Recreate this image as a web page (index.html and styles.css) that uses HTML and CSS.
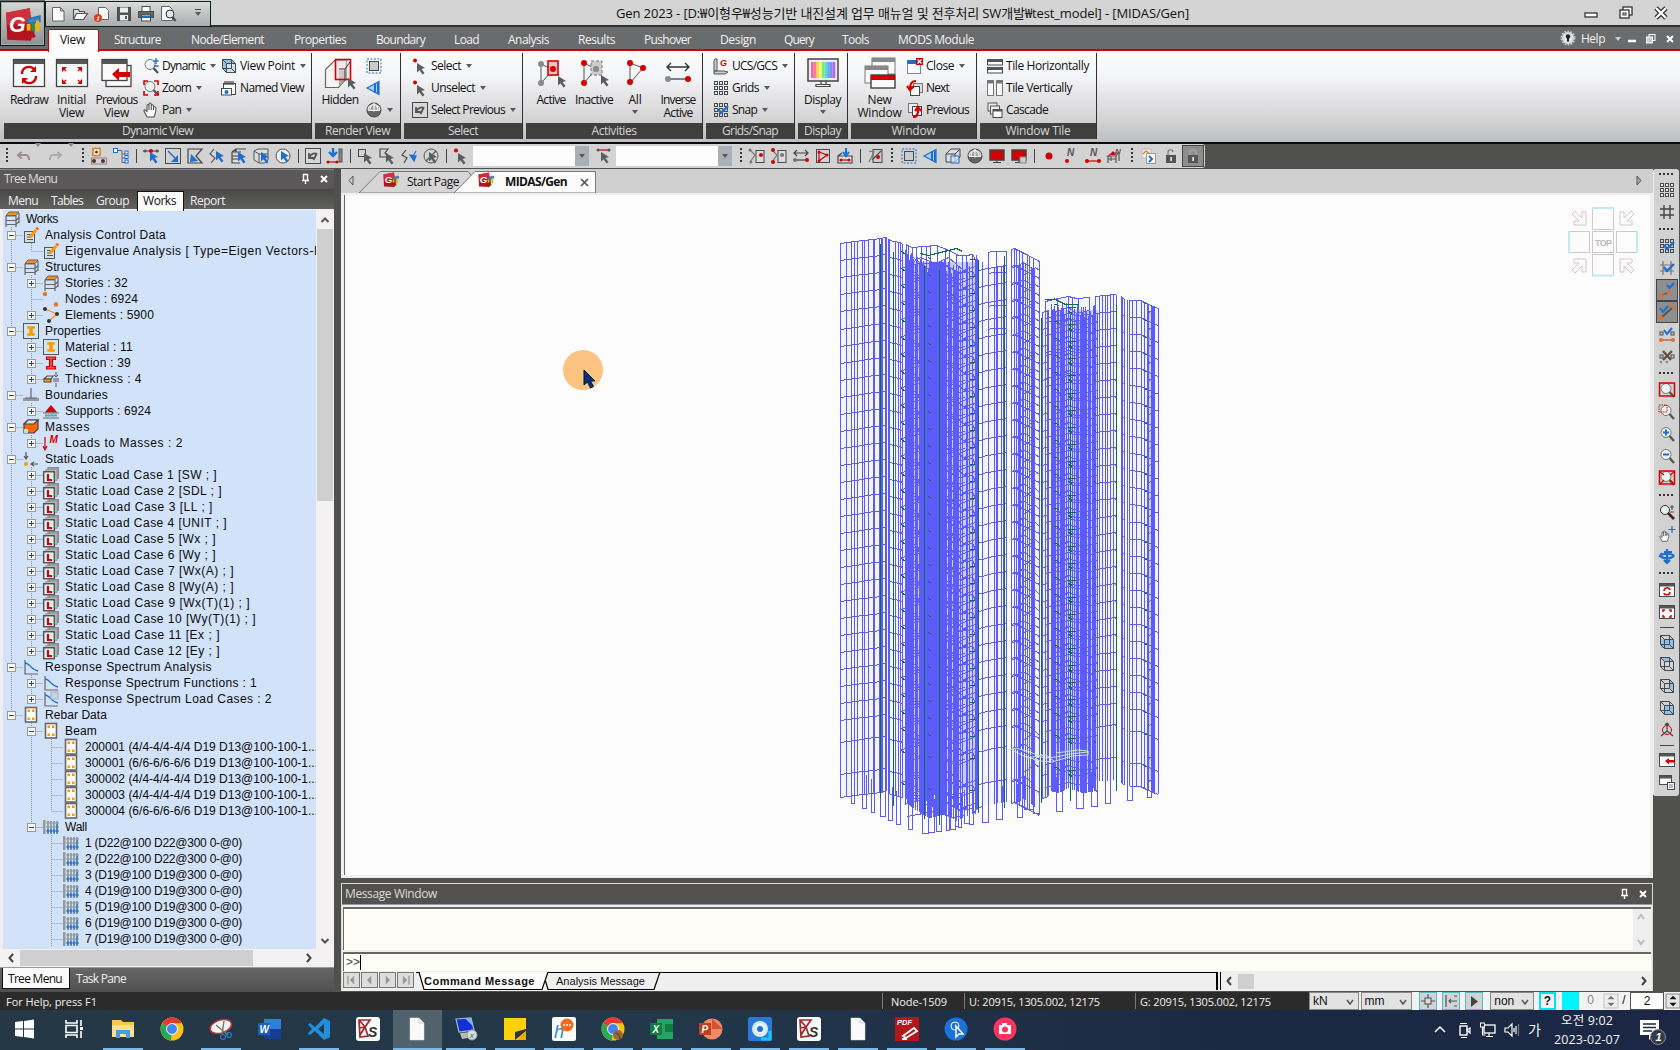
FILE: index.html
```html
<!DOCTYPE html>
<html lang="ko">
<head>
<meta charset="utf-8">
<title>Gen 2023</title>
<link rel="stylesheet" href="styles.css">
</head>
<body>
<header class="top">
  <div class="appbtn"><i data-icon="logo" class="i36"></i></div>
  <div class="titlerow">
    <div class="quick">
      <i data-icon="doc"></i><i data-icon="open"></i><i data-icon="docinfo"></i><i data-icon="save"></i><i data-icon="print"></i><i data-icon="preview"></i><b class="caret bar"></b>
    </div>
    <div class="title"><span data-w="573">Gen 2023 - [D:₩이형우₩성능기반 내진설계 업무 매뉴얼 및 전후처리 SW개발₩test_model] - [MIDAS/Gen]</span></div>
    <div class="winbtns"><i data-icon="wmin"></i><i data-icon="wrest"></i><i data-icon="wclose"></i></div>
  </div>
  <nav class="tabs" id="tabs"></nav>
</header>

<section class="ribbon">
  <div class="group g1"><div class="body">
    <div class="big w42"><i data-icon="redraw" class="i32"></i><span data-w="38">Redraw</span></div>
    <div class="big w43"><i data-icon="initial" class="i32"></i><span data-w="29">Initial</span><span data-w="25">View</span></div>
    <div class="big w47"><i data-icon="previous" class="i32"></i><span data-w="42">Previous</span><span data-w="25">View</span></div>
    <div class="col c78 ml3">
      <div><i data-icon="zoompm"></i><span data-w="43">Dynamic</span><b class="caret"></b></div>
      <div><i data-icon="zoombox"></i><span data-w="29">Zoom</span><b class="caret"></b></div>
      <div><i data-icon="hand"></i><span data-w="19">Pan</span><b class="caret"></b></div>
    </div>
    <div class="col">
      <div><i data-icon="cube"></i><span data-w="55">View Point</span><b class="caret"></b></div>
      <div><i data-icon="camera"></i><span data-w="64">Named View</span></div>
    </div>
  </div><div class="cap"><span data-w="71">Dynamic View</span></div></div>
  <div class="group g2"><div class="body">
    <div class="big w50"><i data-icon="hidden" class="i32"></i><span data-w="37">Hidden</span></div>
    <div class="col ml1">
      <div><i data-icon="selbox"></i></div><div><i data-icon="persp"></i></div><div><i data-icon="globe"></i><b class="caret"></b></div>
    </div>
  </div><div class="cap"><span data-w="65">Render View</span></div></div>
  <div class="group g3"><div class="body">
    <div class="col ml8">
      <div><i data-icon="arrowdot"></i><span data-w="30">Select</span><b class="caret"></b></div>
      <div><i data-icon="arrowdot"></i><span data-w="44">Unselect</span><b class="caret"></b></div>
      <div><i data-icon="selprev"></i><span data-w="74">Select Previous</span><b class="caret"></b></div>
    </div>
  </div><div class="cap"><span data-w="30">Select</span></div></div>
  <div class="group g4"><div class="body">
    <div class="big w44 ml3"><i data-icon="active" class="i32"></i><span data-w="29">Active</span></div>
    <div class="big w42"><i data-icon="inactive" class="i32"></i><span data-w="38">Inactive</span></div>
    <div class="big w40"><i data-icon="all" class="i32"></i><span data-w="13">All</span><b class="caret"></b></div>
    <div class="big w46"><i data-icon="inverse" class="i32"></i><span data-w="35">Inverse</span><span data-w="29">Active</span></div>
  </div><div class="cap"><span data-w="45">Activities</span></div></div>
  <div class="group g5"><div class="body">
    <div class="col ml7">
      <div><i data-icon="ucs"></i><span data-w="45">UCS/GCS</span><b class="caret"></b></div>
      <div><i data-icon="grid"></i><span data-w="27">Grids</span><b class="caret"></b></div>
      <div><i data-icon="snap"></i><span data-w="25">Snap</span><b class="caret"></b></div>
    </div>
  </div><div class="cap"><span data-w="56">Grids/Snap</span></div></div>
  <div class="group g6"><div class="body">
    <div class="big w49"><i data-icon="display" class="i32"></i><span data-w="37">Display</span><b class="caret"></b></div>
  </div><div class="cap"><span data-w="37">Display</span></div></div>
  <div class="group g7"><div class="body">
    <div class="big w55 ml1"><i data-icon="newwin" class="i32"></i><span data-w="24">New</span><span data-w="44">Window</span></div>
    <div class="col">
      <div><i data-icon="winclose"></i><span data-w="28">Close</span><b class="caret"></b></div>
      <div><i data-icon="winnext"></i><span data-w="23">Next</span></div>
      <div><i data-icon="winprev"></i><span data-w="43">Previous</span></div>
    </div>
  </div><div class="cap"><span data-w="44">Window</span></div></div>
  <div class="group g8"><div class="body">
    <div class="col ml7">
      <div><i data-icon="tileh"></i><span data-w="83">Tile Horizontally</span></div>
      <div><i data-icon="tilev"></i><span data-w="66">Tile Vertically</span></div>
      <div><i data-icon="cascade"></i><span data-w="42">Cascade</span></div>
    </div>
  </div><div class="cap"><span data-w="65">Window Tile</span></div></div>
</section>

<div class="toolrow"><div class="toolbar" id="toolbar"></div></div>

<main class="work">
  <aside class="side">
    <div class="phead"><span data-w="53">Tree Menu</span><em></em><i data-icon="pin"></i><i data-icon="x"></i></div>
    <div class="stabs"><span data-w="30">Menu</span><span data-w="32">Tables</span><span data-w="33">Group</span><span class="on" data-w="33">Works</span><span data-w="35">Report</span></div>
    <div class="treebox">
      <div class="tree" id="tree"></div>
      <div class="vscroll"><i data-icon="up"></i><u></u><i data-icon="down"></i></div>
    </div>
    <div class="hscroll"><i data-icon="left"></i><u></u><em></em><i data-icon="right"></i></div>
    <div class="btabs"><span class="on" data-w="54">Tree Menu</span><span data-w="50">Task Pane</span></div>
  </aside>

  <section class="center">
    <div class="mditabs">
      <svg width="1310" height="24" viewBox="341 169 1310 24">
        <path d="M359 193L380 171.500H468L475 180L462 193Z" fill="#d6d6d6" stroke="#777"/>
        <path d="M454 193L475 171.500H595.500V193Z" fill="#fcfcfc" stroke="#777"/>
        <path d="M353 176v9l-4-4.500z" fill="none" stroke="#555"/>
        <path d="M1637 176v9l4-4.500z" fill="#aaa" stroke="#555"/>
        <path d="M581 179l7 7M588 179l-7 7" stroke="#555" stroke-width="1.700"/>
      </svg>
      <div class="mdilabels"><i data-icon="logo"></i><span class="t1" data-w="52">Start Page</span><i data-icon="logo"></i><span class="t2" data-w="62">MIDAS/Gen</span></div>
    </div>
    <div class="viewport"><svg id="model" width="1305" height="680" viewBox="345 195 1305 680"></svg></div>
    <div class="msg">
      <div class="phead"><span data-w="92">Message Window</span><em></em><i data-icon="pin"></i><i data-icon="x"></i></div>
      <div class="log"><em></em><div class="lscroll"><i data-icon="upg"></i><i data-icon="downg"></i></div></div>
      <div class="prompt">&gt;&gt;<u></u></div>
      <div class="mtabs">
        <div class="nav"><i data-icon="n1"></i><i data-icon="n2"></i><i data-icon="n3"></i><i data-icon="n4"></i></div>
        <div class="tabarea">
          <svg width="250" height="18"><path d="M3.500 0L8 17.500H127L132 0Z" fill="#fcfcfc"/><path d="M3 0L8 17.500H126L132 0M129.500 9L132 17.500H238L244 0" stroke="#000" fill="none" stroke-width="1.200"/></svg>
          <span class="a" data-w="111">Command Message</span><span class="b" data-w="89">Analysis Message</span>
        </div>
        <div class="mscroll"><i data-icon="left"></i><u></u><em></em><i data-icon="right"></i></div>
      </div>
    </div>
  </section>

  <aside class="rbar" id="rbar"></aside>
</main>

<footer class="status">
  <span class="help" data-w="91">For Help, press F1</span>
  <span class="s1" data-w="56">Node-1509</span><span class="s2" data-w="131">U: 20915, 1305.002, 12175</span><span class="s3" data-w="131">G: 20915, 1305.002, 12175</span>
  <div class="ctl">
    <div class="cb c49"><span>kN</span><i data-icon="chev"></i></div>
    <div class="cb c51"><span>mm</span><i data-icon="chev"></i></div>
    <div class="sq"><i data-icon="cross"></i></div><div class="sq"><i data-icon="dist"></i></div><div class="sq"><i data-icon="play"></i></div>
    <div class="cb c44"><span>non</span><i data-icon="chev"></i></div>
    <div class="qm">?</div><div class="cy"></div>
    <div class="zero">0</div><i data-icon="sping" class="spin"></i><div class="slash">/</div><div class="two">2</div><i data-icon="spin" class="spin dark"></i>
  </div>
</footer>

<footer class="taskbar">
  <div class="apps" id="apps"></div>
  <div class="tray">
    <i data-icon="tup"></i><i data-icon="tcam"></i><i data-icon="tnet"></i><i data-icon="tvol"></i><span class="ime">가</span>
    <div class="clock"><span data-w="52">오전 9:02</span><span data-w="66">2023-02-07</span></div>
    <i data-icon="tnote" class="i24"></i>
  </div>
</footer>
<script src="app.js"></script>
</body>
</html>
```

FILE: styles.css
```css
*{box-sizing:border-box}
body{margin:0;width:1680px;height:1050px;overflow:hidden;display:flex;flex-direction:column;background:#50504e;font:12px/16px "Open Sans","Noto Sans CJK KR",sans-serif;color:#111}
i{display:block;flex:none;width:16px;height:16px}
i svg{display:block;width:100%;height:100%;overflow:visible}
i.i32{width:32px;height:32px}
i.i36{width:36px;height:36px}
i.i24{width:24px;height:24px}
em{flex:1}
span{white-space:nowrap;display:block}
.caret{flex:none;width:0;height:0;border:3px solid transparent;border-top:4px solid #5a5a5a;border-bottom:0;margin-left:5px}
.caret.bar{margin-left:13px;position:relative}
.caret.bar::before{content:"";position:absolute;left:-3px;top:-7px;width:6px;height:1px;background:#444}

.top{flex:none;height:51px;display:grid;grid-template:28px 21px/45px 1fr;background:#6a6b6d;border-bottom:2px solid #d40000}
.appbtn{grid-row:1/3;border:1px solid #102018;background:linear-gradient(#d6d6d6,#8d8f92);margin:1px 0 3px 0;padding:5px 4px;box-shadow:inset 0 0 0 1px #aaa}
.titlerow{background:#d4d4d4;border-bottom:2px solid #303030;display:flex;height:27px}
.quick{width:166px;height:26px;border:1px solid #102018;background:linear-gradient(#dcdcdc,#a9abad);display:flex;align-items:center;gap:6px;padding-left:4px;margin-top:1px}
.title{margin-left:405px;font-size:13px;line-height:26px;width:573px}
.winbtns{margin-left:auto;display:flex;align-items:center;gap:19px;padding-right:11px}
.tabs{display:flex;color:#f2f2f2;line-height:24px;position:relative;z-index:0;height:21px}
.tabs span{position:relative;height:23px}
.tabs .on{color:#111}
.tabs .on::before{content:"";position:absolute;z-index:-1;left:-12px;top:1px;width:49px;height:22px;background:#fcfcfc;border:1px solid #d40000;border-bottom:0;border-radius:2px 2px 0 0}
.tabs .help{margin-left:5px;margin-right:10px}
.tabs .r{display:flex;align-items:center;margin-left:auto;padding-right:2px;height:21px}

.ribbon{flex:none;height:93px;display:flex;gap:3px;padding:2px 0 4px 4px;background:linear-gradient(#fdfdfd 0,#f3f4f7 30%,#e4e3e5 50%,#d4d4d5 75%,#bdbec3 100%);border-bottom:2px solid #0a0a0a}
.group{border-right:1px solid #303030;display:flex;flex-direction:column;height:86px;flex:none}
.g1{width:308px}.g2{width:86px}.g3{width:119px}.g4{width:177px}.g5{width:89px}.g6{width:50px}.g7{width:126px}.g8{width:117px}
.body{flex:1;display:flex}
.cap{height:16px;background:#3f3f3d;color:#d6d6d6;line-height:15px;display:flex;justify-content:center}
.big{display:flex;flex-direction:column;align-items:center;padding-top:4px;line-height:13px}
.big i{margin-bottom:4px}
.big .caret{margin:4px 0 0}
.w40{width:40px}.w42{width:42px}.g1 .w42{width:42px;margin-left:4px}.w43{width:43px}.w44{width:44px}.w46{width:46px}.w47{width:47px}.w49{width:49px}.w50{width:50px}.w55{width:55px}
.ml1{margin-left:1px}.ml3{margin-left:3px}.ml7{margin-left:7px}.ml8{margin-left:8px}
.col{padding-top:2px}
.c78{width:78px}
.g1 .col,.g2 .col{position:static}
.col div{height:22px;display:flex;align-items:center}
.col span{margin-left:3px}

.toolrow{flex:none;height:25px;background:#50504e}
.toolbar{height:24px;width:1205px;background:#d3d3d3;display:flex;align-items:center;border-radius:0 3px 3px 0;padding-left:2px}
.it{flex:none;width:22px;height:22px;padding:3px}
.it.on{background:#8e8e8e;border:1px solid #444;padding:2px}
.sep{flex:none;width:8px;height:14px;background:linear-gradient(#444,#444) 50%/1px 100% no-repeat}
.grip{flex:none;width:10px;height:16px;background:repeating-linear-gradient(#333 0 2px,transparent 2px 4px) 50%/2px 100% no-repeat}
.g12{width:12px}
.ca{flex:none;width:11px;padding-left:1px}
.combo{flex:none;width:116px;height:20px;background:#fcfcfc;display:flex;justify-content:flex-end;margin:0 4px 0 1px}
.combo b{width:14px;background:#aab0b6;display:flex;align-items:center;justify-content:center}
.combo .caret{margin:0;background:none;width:0}

.work{flex:none;height:823px;display:flex}
.side{width:336px;display:flex;flex-direction:column;background:#50504e;padding-right:2px}
.phead{flex:none;height:20px;background:#5a5859;color:#dcdcdc;display:flex;align-items:center;padding:0 2px 1px 4px;gap:3px}
.side .phead{border-top:1px solid #888}
.stabs{flex:none;height:20px;color:#f0f0f0;display:flex;padding:3px 0 0 8px;background:linear-gradient(#484846,#606060)}
.stabs span{margin-right:13px;line-height:17px}
.stabs .on{position:relative;color:#111;z-index:0;margin:0 14px 0 1px}
.stabs .on::before{content:"";position:absolute;z-index:-1;left:-6px;top:-1px;width:45px;height:19px;background:#fafafa;border:1px solid #111;border-bottom:0}
.treebox{flex:none;height:740px;display:flex;background:#d2e2f8;border-left:3px solid #f0f0f0;border-top:1px solid #eee}
.tree{width:313px;overflow:hidden;padding-top:1px}
.row{height:16px;display:flex;align-items:center;font:12px/16px "Liberation Sans","Noto Sans CJK KR",sans-serif;color:#0a0a0a}
.row svg.gut{flex:none;display:block}
.row i{margin-right:6px}
.row span{white-space:pre}
.vscroll{width:18px;background:#f3f1f1;display:flex;flex-direction:column;align-items:center;justify-content:space-between;padding:2px 0 0}
.vscroll u{width:16px;height:272px;background:#cfcfcf;margin-top:1px;margin-bottom:auto}
.hscroll{flex:none;height:18px;background:#f3f1f1;display:flex;align-items:center;padding:0 17px 0 3px}
.hscroll u{width:233px;height:16px;background:#cfcfcf;margin-left:1px}
.btabs{flex:none;height:25px;background:linear-gradient(#666,#505050);color:#f0f0f0;display:flex;line-height:21px;padding-left:2px;border-top:1px solid #999}
.btabs .on{color:#111;position:relative;z-index:0;margin:0 14px 0 6px}
.btabs .on::before{content:"";position:absolute;z-index:-1;left:-6px;top:0;width:66px;height:20px;background:#fafafa;border:1px solid #111;border-top:0}

.center{width:1312px;margin-left:5px;display:flex;flex-direction:column}
.mditabs{height:24px;background:#d0d0d0;position:relative}
.mditabs svg{display:block}
.mditabs i svg{width:16px;height:16px}
.mdilabels{position:absolute;left:42px;top:4px;display:flex;line-height:17px}
.mdilabels i{margin-top:-1px}
.t1{margin:0 19px 0 8px}
.t2{margin-left:11px;font-weight:700}
.viewport{height:685px;border:2px solid #eee;border-width:2px 3px 3px;background:#fcfcfc;overflow:hidden}
.viewport svg{display:block;margin:0 0 0 1px;outline:1px solid #666}
.msg{margin-top:5px;height:108px;border:1px solid #dcdcd0;border-bottom:0;display:flex;flex-direction:column;background:#f0eff0}
.msg .phead{height:21px;background:#53514f;padding:0 1px 0 3px;border-bottom:1px solid #99a}
.log{height:43px;margin:2px 1px 0;border:1px solid #666;border-width:2px 0 0 1px;background:#fdfdf6;display:flex}
.lscroll{width:18px;background:#efefef;display:flex;flex-direction:column;justify-content:space-between}
.prompt{height:19px;margin:2px 1px 0;border:1px solid #666;border-width:2px 0 0 1px;background:#fdfdf6;display:flex;font:12px/17px "Liberation Sans",sans-serif;padding-left:2px;color:#444}
.prompt u{width:1px;height:15px;background:#000;margin-top:1px}
.mtabs{display:flex;height:18px;margin-top:1px}
.nav{display:flex;margin:0 1px}
.nav i{width:17px;height:16px;background:#ddd;border:1px solid #777;margin-right:1px}
.tabarea{width:802px;position:relative;display:flex;border-right:2px solid #000;border-top:1px solid #000;font:11px/17px "Liberation Sans",sans-serif}
.tabarea svg{position:absolute;left:0;top:-1px}
.tabarea .a{font-weight:700;margin-left:8px;position:relative}
.tabarea .b{margin-left:21px;position:relative}
.mscroll{flex:1;display:flex;align-items:center;border-left:1px solid #000;margin-left:2px}
.mscroll u{width:16px;height:15px;background:#cfcfcf;margin-left:1px}

.rbar{width:26px;height:627px;background:#d2d2d2;border-radius:3px;display:flex;flex-direction:column;align-items:center;border-left:1px solid #eee}
.rbar .hg{flex:none;width:15px;height:12px;background:repeating-linear-gradient(90deg,#333 0 2px,transparent 2px 4px) 50%/100% 2px no-repeat}
.rbar .hg:first-child{height:10px}
.rbar .hs{flex:none;width:14px;height:8px;background:linear-gradient(#444,#444) 50%/100% 1px no-repeat}

.status{flex:none;height:18px;background:#2c2b2c;color:#f0f0f0;display:flex;line-height:19px;font-size:11px}
.help{margin-left:6px}
.status .s1,.status .s2,.status .s3{position:relative}
.status span[class^=s]::before{content:"";position:absolute;left:-5px;top:1px;width:1px;height:16px;background:#777}
.status .s1::before{left:-9px!important}
.s1{margin-left:794px}.s2{margin-left:22px}.s3{margin-left:40px}
.ctl{margin-left:auto;width:371px;display:flex;color:#111;background:#f2f2f2;font:12px/17px "Liberation Sans",sans-serif}
.cb{background:#e2e2e2;border:1px solid #888;display:flex;justify-content:space-between;padding-left:3px;margin-right:2px}
.c49{width:50px}.c51{width:52px;margin-right:7px}.c44{width:44px;margin:0 5px 0 2px}
.sq{width:18px;border:1px solid #5bc;background:#cfd4d6;margin-right:5px}
.qm{width:17px;border:2px solid #00e4f0;text-align:center;line-height:14px;font-weight:700;margin-right:6px}
.cy{width:17px;background:#00f4fc}
.zero{width:24px;text-align:center;color:#888}
.spin{width:14px;height:18px;margin-left:2px}
.slash{width:11px;text-align:center}
.two{width:34px;border:1px solid #555;background:#fff;text-align:center;margin-left:1px}

.taskbar{flex:none;height:40px;background:linear-gradient(90deg,#243845 0,#22374a 40%,#1b2942 75%,#1b2745);display:flex;justify-content:space-between}
.apps{display:flex;padding-left:1px}
.app{width:49px;height:40px;padding:7px 0 0 12px;position:relative}
.app.sel{background:#50626c}
.app.run{background-image:linear-gradient(#76b9ed,#76b9ed);background-size:40px 2px;background-position:4px 38px;background-repeat:no-repeat}
.app.sel.run{background-size:49px 2px;background-position:0 38px}
.tray{display:flex;align-items:center;color:#f4f4f4;gap:8px;padding-right:17px}
.ime{font-size:14px}
.clock{width:76px;display:flex;flex-direction:column;align-items:center;line-height:19px;font-size:12.5px;margin-right:6px}
```

FILE: app.js
```js
const D='#444a50',R='#d40000',B='#1c6fd0',G='#8a8a8a';
const p=(d,s=D,f='none',w=1.2)=>`<path d="${d}" stroke="${s}" fill="${f}" stroke-width="${w}"/>`;
const r=(x,y,w,h,f='none',s=D,sw=1)=>`<rect x="${x}" y="${y}" width="${w}" height="${h}" fill="${f}" stroke="${s}" stroke-width="${sw}"/>`;
const c=(x,y,q,f,s='none')=>`<circle cx="${x}" cy="${y}" r="${q}" fill="${f}" stroke="${s}"/>`;
const t=(x,y,z,s,f='#fff',b='bold')=>`<text x="${x}" y="${y}" font-size="${z}" font-weight="${b}" font-family="Liberation Sans" fill="${f}" letter-spacing="0">${s}</text>`;
const cur=(x,y,f='#5a5e62')=>`<path d="M${x} ${y}l8 5-3.500 1 3 4-2 1.500-3-4.300-2.500 2.300z" fill="${f}"/>`;
const grid9=(f='none')=>[1.5,6.5,11.5].map(y=>[1.5,6.5,11.5].map(x=>r(x,y,3,3,f)).join('')).join('');
const cubeD=p('M1.500 1.500h9l4 4v9h-9l-4-4zM5.500 5.500h9M5.500 5.500v9M1.500 1.500l4 4M10.500 1.500v9h-9M10.500 10.500l4 4',D,'none',1);
const tick=p('M5 7l3 4 7-7',B,'none',2.4);
const wn=r(.5,1.5,15,13,'#fcfcfc')+r(1,2,14,2.5,'#555','none');
const mag=(x='')=>c(7,6.5,5,'#eef3f4','#777')+p('M10.500 10l4.500 5','#555','none',2.4)+x;
const corners=p('M1 5V1h4M11 1h4v4M15 11v4h-4M5 15H1v-4',R,'none',1.6);
const slab=p('M2 4.500l3-3.500h10l-3 3.500z','#665','#ff8c1a',1)+p('M2 5h10v11M2 5v11M15 2v10M2 9.500h10l3-3M2 13.500h10l3-3','#666','none',1.2);
const pen=r(1.5,4.5,10,11,'#cfe3df','#556')+p('M4 7.500h4M4 10h4M4 12.500h6','#556')+p('M7 10l6-7','#f90','none',3)+p('M13.500 2.500l1.500-1.700','#f60','none',3);
const ib=(f)=>p('M4.500 3.500h7v2h-2v5h2v2h-7v-2h2v-5h-2z',f,f,.6);
const reb=r(2.5,.5,11,14.5,'#fcfcfc','#666',1.6)+[[4.5,2.5],[9,2.5],[4.500,10.500],[9,10.500]].map(a=>r(a[0],a[1],2.5,2.5,'#f90','none')).join('');
const hand=p('M4 15l-3-6c0-2 2-1 3 1V4c0-2 2-2 2 0V2.500c0-2 2.300-2 2.300 0V4c0-2 2.200-1.500 2.200 0v2c0-2 2.300-1.500 2.300 0 .7 4-.8 6-1.800 9zM6 4v4M8.300 4v4M10.500 5v3','#555','#fafafa',1.1);
const spec=p('M2 1v14h13','#666')+p('M2 4c5 0 6 7 13 8',B,'none',1.3);
const globe=c(8,8,7,'#666','#444')+p('M2 8C2 1 14 1 14 8M8 1.500v8M8 1.500C4 4 4 8 4 9M8 1.500c4 3 4 6 4 7M2 8.500h12','#eee','#aaa',1.2);
const lock=r(3,7,10,8,'#555','none')+r(7.3,9,1.6,4,'#eee','none');
const mon=(f)=>r(1,2,14,10,f,'#444',1.5)+p('M8 12v2M4 14.500h8','#444');
const nodes=(a)=>a.map(q=>c(q[0],q[1],q[2]||2,q[3]||R)).join('');
const S24={
 ks:`<rect width="24" height="24" rx="3" fill="#fafafa"/>`+p('M3 3h11l-5 7 3 9-8 1zM3 11l6-1M9 10L4 4M9 10l-5 8','#a22a2a','none',1.7)+t(12,20,14,'S','#333'),
 file:p('M5 1h9l5 5v17H5z','#ddd','#fafafa',.5)+p('M14 1v5h5','#bbb','none',.7)
};
const I={
doc:p('M2.500 1.500h8l3.500 3.500v10h-11.500zM10.500 1.500v3.500h3.500','#666','#fcfcfc',1),
open:p('M1.500 13.500v-10h5l1 2h5v2','#555','#ddd')+p('M1.500 13.500l3-6h11l-4 6z','#555','#fafafa'),
docinfo:p('M4.500 1.500h7l3 3v9h-10z','#666','#fcfcfc',1)+c(4,12,4,'#e2401b')+t(3,15,8,'i'),
save:r(1.5,1.5,13,13,'#555')+r(4,1.5,8,5,'#eee','none')+r(4,9,8,5.500,'#eee','none')+r(9,10,2,3,'#555','none'),
print:r(4,.5,8,5,'#fff')+r(.5,5.500,15,6,'#666')+r(3.500,9,9,6,'#fff')+r(4,10,8,2,B,'none'),
preview:p('M1.500 .5h8l3 3v11h-11z','#666','#fcfcfc',1)+c(10,8,4,'#dfe8ee','#333')+p('M12.500 11l3 4',D,'none',2.200),
logo:`<path d="M.5 2.500L11 .5 12.500 12 11.500 15 1 14.500z" fill="#b5141c"/><path d="M.5 2.500L11 .5 11.500 7 1 8z" fill="#d0303a"/>`+p('M10 5.500l5.500-1.500v2.500l-5 1z','#2a6fb0','#3a86c8',.7)+p('M10.500 7.500v3','#f2b705','none',1.600)+p('M12.500 7v4.500','#3a8c3a','none',1.600)+p('M14.500 6v5','#f2b705','none',1.400)+p('M9 13l3-1.500 1 2','#b5141c','none',1.500)+t(1.800,11.300,9.500,'G'),
wmin:r(2,8,12,4,'#fff','#333',1.300),
wrest:r(5,2,9,8,'#fff','#333',1.300)+r(2,5,9,8,'#fff','#333',1.300)+r(5,8,3,2,'#fff','#333'),
wclose:p('M3 3l10 10M13 3L3 13','#333','none',4.600)+p('M3 3l10 10M13 3L3 13','#fff','none',2.300),
mmin:p('M4 10h8','#fff','none',2.500),mrest:r(6,3.500,6,6,'#777','#fff')+r(3.500,6,6,6,'#ccc','#fff'),mx:p('M5 5l6 6M11 5l-6 6','#fff','none',2),
gear:`<circle cx="8" cy="7" r="6" fill="#e4e4e4" stroke="#ccc" stroke-width="3" stroke-dasharray="1.500 1.200"/>`+c(8,5.500,2.200,'#222')+r(7,6,2,4.500,'#222','none'),
redraw:r(.5,2.500,31,27,'#fafafa','#444',1.300)+r(1,3,30,4,'#555','none')+p('M9 17c0-8 9-9 13-4M23 19c0 8-9 9-13 4',R,'none',2.400)+p('M23 9v6h-6zM9 27v-6h6z','none',R),
initial:r(.5,2.500,31,27,'#fafafa','#444',1.300)+r(1,3,30,4,'#555','none')+p('M6 15l0-5h5zM26 15v-5h-5zM6 22v5h5zM26 22v5h-5z','none',R)+p('M7 11l3 3M25 11l-3 3M7 26l3-3M25 26l-3-3',R),
previous:r(5,8.500,25,21,'#fafafa','#444',1.300)+r(1,2.500,25,21,'#fafafa','#444',1.300)+r(1,3,25,4,'#555','none')+p('M11 17l7-6v4h11v5H18v4z','none',R),
zoompm:mag(p('M13 0v6M10.500 3h5M11 8h4.500',B,'none',1.300)),zoombox:mag()+corners,hand,
cube:p('M1.500 1.500h9l4 4v9h-9l-4-4z','none','#8fc0e8')+r(5.500,5.500,9,9,'#cfe4f6','none')+cubeD,
camera:r(2.500,3.500,12,11,'#fafafa')+p('M4 1v4M6 1v4M8 1v4M10 1v4M12 1v4','#444')+r(.5,8.500,10,6.500,'#fff')+c(5.500,12,2,B),
hidden:p('M1.500 12.500l9-9h12v18l-8 9h-13z','#666','#f4f4f4')+p('M15 29.500l7-8v-8h-7z','none','#aaa')+r(11.500,2.500,15,20,'#f3dede88',R,1.600)+p('M15 12h6v10M21 12l5-7','#333','none',1)+cur(24,21),
selbox:r(3.500,3.500,9,9,'#ccc')+`<rect x="1" y="1" width="14" height="14" fill="none" stroke="${B}" stroke-dasharray="2 1.500"/>`,
persp:p('M1 8l12-6.500v13z',B,'#a8cdf0')+p('M9 3.500v9M12 3v10',B,'none',2),globe,
arrowdot:c(3,2.500,2,R)+cur(5,5),selprev:r(.5,.5,15,15,'#d8d8d8')+p('M4 5v5h5M4.500 9c2-4 6-4 7-3l-3 6','#555','none',1.800),
active:p('M6 7l12 6L6 26z','#555','none',1)+nodes([[6,7,3,G],[6,26,3,G]])+r(13,4,10,14,'#f8c0c0',R,1.600)+c(18,12,3,R)+cur(23,19),
inactive:p('M6 6l12 6L6 26z','#555','none',1)+nodes([[6,6,3],[6,26,3]])+`<rect x="13" y="4" width="11" height="14" fill="#ccc" stroke="#777" stroke-dasharray="3 2"/>`+c(18,12,3,G)+cur(23,18),
all:p('M11 6l13 5-13 15z','#555','none',1)+nodes([[11,6,3],[24,11,3],[11,25,3]]),
inverse:p('M5 10h22M9 6l-4 4 4 4M23 6l4 4-4 4','#333','none',1.400)+p('M6 22h20','#333')+nodes([[6,22,3,G],[26,22,3]]),
ucs:p('M2 1h2v12H1V3zM1 13h10l4 1-3 2H1z','#555','#ccc',1)+t(7,8,9,'G',R),grid:grid9('#eee'),snap:grid9()+tick,
display:r(1,2,30,22,'#eee','#444',1.500)+['#e6a','#f79','#fc5','#ef5','#7e7','#5dd','#6ae','#88e','#b6e'].map((q,i)=>r(4+i*2.700,5,2.700,16,q,'none')).join('')+p('M14 24v3M19 24v3M9 29.500h14v-2H9z','#444','#fff'),
newwin:r(8,1,23,16,'#fafafa','#777')+r(8,1,23,4,'#888','none')+r(1,9,23,17,'#fafafa','#777')+r(1,9,23,4,'#888','none')+r(7,18,24,13,'#fafafa','#333',1.300)+r(7,18,24,5,R,'none'),
winclose:r(.5,2.500,13,13,'#fafafa','#888')+r(.5,2,9,4,B,'none')+r(9,0,7,7,R,'none')+p('M10.500 1.500l4 4M14.500 1.500l-4 4','#fff'),
winnext:r(6.500,3.500,9,9,'#ddd','#777')+r(3.500,6.500,9,9,'#fafafa','#444')+p('M9 1C4 1 3 4 3 9M0 6l3 4 4-4',R,'none',2.200),
winprev:r(1.500,1.500,9,9,'#eee','#777')+r(5.500,4.500,9,9,'#fafafa','#444')+p('M6 15c5 0 5-4 5-8M8 9l3-4 3 4',R,'none',2.200),
tileh:r(.5,1.500,15,5.500,'#fafafa')+r(.5,1,15,3,'#555','none')+r(.5,9.500,15,5.500,'#fafafa')+r(.5,9,15,3,'#555','none'),
tilev:r(.5,.5,6,15,'#fafafa','#777')+r(9.500,.5,6,15,'#fafafa','#777')+r(.5,.5,6,3,'#777','none')+r(9.500,.5,6,3,'#777','none'),
cascade:r(1,1,9,8,'#eee','#555')+r(3.500,4,9,8,'#eee','#555')+r(6,7.500,9,8,'#fff','#444')+r(6,7.500,9,2,'#555','none'),
undo:p('M3 7h8c3 0 3 3 3 5M6.500 4L3 7l3.500 3.500','#998f8c','none',2),redo:p('M13 7H5c-3 0-3 3-3 5M9.500 4L13 7l-3.500 3.500','#aaa','none',2),
seltree:r(2,.5,7,7,'#fff','#e87722',1.600)+nodes([[5.500,4,1.500,'#532'],[3,13,2,'#532'],[12,13,2,'#532']])+r(.5,10,15,6,'none','#888'),
tree:r(.5,.5,4,4,'#fff',B)+p('M5 2.500h4v12h3M9 6h3M9 10h3','#666','none',1)+[3,7.500,12].map(y=>r(12,y,3,3,'#fff',B)).join(''),
nodesel:p('M0 3h16','#555')+nodes([[2,3,1.500,'#555'],[8,3,2],[14,3,1.500,'#555']])+cur(7,4,B),
winsel:r(.5,.5,15,15)+p('M3 3l8 8',B,'none',1.500)+p('M13 7v7H6z','none',B),
polysel:p('M15 1H1v14h14L9 8z','#444')+p('M4 6l7 7-8 1z','none',B),
fence:p('M5 1L1 6l5 4-4 5','#555')+cur(7,3,B),volsel:p('M1 4l4-3h10M1 4v11h8M1 4h9M1 8h6M1 11h6M5 1v3','#444','#ddd')+cur(7,4,B),
cubesel:p('M1 3l4-2h10v11l-3 3H6L1 12zM1 3l5 3v9M6 6h9','#555','#ddd',1)+cur(8,4,B),circsel:c(8,8,7,'#eee','#555')+cur(6,3,B),
drop:p('M6 0v7M2 4l4 4 4-4',B,'none',2.400)+r(12,1,3,13,'#888','#555')+p('M1 14h9',R)+nodes([[1,14,1.500],[10,14,1.500]]),
usel:r(1.500,1.500,7,7)+cur(7,5),upoly:p('M1 1h8L6 5l3 4H1z')+cur(7,5),ufence:p('M5 2L1 7l5 3-3 5')+p('M15 3l-3 5M9 7l4 6 2-5z',B,B),ucirc:c(8,8,7,'none','#555')+p('M3 13L13 3','#555')+cur(6,4),
nodecur:p('M1 2h12',R)+nodes([[2,2,1.500,'#555'],[13,2,1.500,'#555']])+cur(5,4),
a1:r(7,2.500,8,12,'#ddd')+p('M1 2l5 5-5 7','#777')+nodes([[12,7,2],[1,2,1.500,'#777'],[2,14,1.500,'#777']]),
a2:r(7,2.500,8,12,'#ddd')+p('M1 2l5 5-5 7','#777')+nodes([[11,7,2,'#777'],[2,2,2],[2,14,2]]),
a3:p('M1 5h14M4 2L1 5l3 3M12 2l3 3-3 3','#444')+p('M2 12h12','#444')+nodes([[2,12,2,'#777'],[14,12,2]]),
a4:r(1.500,1.500,13,13)+p('M4 4l8 3-8 6z',R)+nodes([[4,4,1.500],[12,7,1.500],[4,13,1.500]]),
a5:p('M1 15V8h14v7zM1 8l4-3','#444','#ddd')+p('M9 0v6M6 4l3 4 3-4',B,'none',2)+p('M4 12h8',R)+nodes([[4,12,1.500],[12,12,1.500]]),
a6:r(6,1.500,9,13,'#ccc')+p('M2 3l5 1-5 10','#777')+c(11,9,2,R)+p('M14 3l-9 9','#555'),
mon1:mon(R),mon2:mon(R)+r(9,9,6,6,'#ccc','#888'),cubes:p('M1 6l5-5h9v8l-5 5H1zM1 6h9v8M10 6l5-5','#444','#ddd',1)+r(6,8,8,7,'#cfe4f6aa',B),
dot:c(8,8,3.500,R),nn:t(4,8,10,'N','#555')+c(4,13,2,R),en:t(5,8,10,'N','#555')+p('M2 13h12',R)+nodes([[2,13,2],[14,13,2]]),fr:p('M1 8l4-3h6l-2 3zM1 8v7M9 8v7M12 6v7M4 8v5M1 11h8','#555')+p('M3 7l3-4 3 4z','none',R)+t(8,6,8,'N','#555'),
docs:r(1,1,9,9,'#f4ece8','#bbb')+p('M2 6l3-3 3 2','#e87722')+r(5.500,5.500,9,10,'#fafafa','#999')+p('M8 8l3 3-3 3',B,'none',2),
unlock:lock+p('M5 7V4c0-3 5-3 5 0','#777'),lock:lock+p('M5 7V4c0-3 6-3 6 0v3','#aaa'),
pin:p('M5 9.500h7M6.500 9V3.500h4V9M8.500 10v3','#fff','none',1.400),x:p('M5 5l6 6M11 5l-6 6','#fff','none',2),
up:p('M4.500 10L8 6.500 11.500 10','#555','none',2),down:p('M4.500 6L8 9.500 11.500 6','#555','none',2),left:p('M10 4L6.500 8l3.500 4','#444','none',2),right:p('M6 4l3.500 4L6 12','#444','none',2),upg:p('M5 10l3-4 3 4','#bbb','none',2),downg:p('M5 6l3 4 3-4','#bbb','none',2),
n1:p('M4 3v10','#888')+p('M11 3v10L6 8z','none','#999'),n2:p('M10 3v10L5 8z','none','#999'),n3:p('M6 3v10l5-5z','none','#999'),n4:p('M12 3v10','#888')+p('M5 3v10l5-5z','none','#999'),
slab,pen,nodes:nodes([[2,3,2.200,'#e87722'],[13,13.500,2.200,'#e87722']]),elems:p('M2 2l12 5-8 7','#ff8c1a')+nodes([[2,2,2,'#333'],[14,7,2,'#333'],[6,14,2,'#333']]),
mat:r(.5,.5,15,15,'#cfe8e8','#556')+ib('#f90'),sec:p('M3.500 2h9v2.500H9.500v7H12.500V14h-9v-2.500h3v-7h-3z',R,'#f05040',1.200),thick:p('M1 8l3-3h6l-2 3z','#555','#ddd')+r(1,8,7,3,'#f90')+p('M10 8h6M10 10h6M13 1v5M11 4l2 2 2-2M13 16v-4','#555','none',1),
bound:r(0,11,16,3,'#999','none')+p('M8 1v10M2 11h12','#667'),supp:p('M3 9l5-6 5 6z',R,R)+p('M0 10h16M0 15h16','#667')+p('M2 12.500h12','#5aa','none',2),
mass:p('M1 5l4-4h10v9l-4 4H1z','#444','#f60')+p('M1 5h10l4-4H5z','#444','#ddd')+r(1,10,4,4,'#bde','none'),l2m:p('M2 2v12M0 11l2 4 2-4',R)+t(6.500,8,10,'M',R)+c(12,12,3,'#ddd'),sl:p('M3 1v7M1 5l2 3 2-3M15 13H8M11 11l-3 2 3 2','#555')+c(3,13,2,'#f90'),
lc:r(5,.5,10.500,11,'#999','#888')+r(3,2.500,11,11,'#b8b8b8','#999')+r(.7,4.700,10.600,11,'#dff2f2','#555',1.500)+p('M5 7v6h4',R,'none',2.200),spec,spec2:spec+r(8,1,7,7,'#c8d4e0','#aab'),reb,
wall:r(0,1,2.500,14,'#999','none')+p('M5 2v12M8 2v12M11 2v12M14 2v12','#777')+p('M3 4h13M3 8h13','#899','none',1)+p('M3 12h13M14 5v10M5 10v5M11 10v5M8 10v5',B,'none',1.200),
grid2:p('M5 1v14M11 1v14M1 5h14M1 11h14','#444','none',1.400),gs:grid9()+tick,gl:p('M4 1v14M12 1v14M1 5h14M1 11h14','#777')+tick,
ns:p('M3 13l8-3','#555')+nodes([[2.500,13,2,'#f26a1b'],[10,10,2,'#f26a1b']])+p('M8 3l2.500 3L15 1',B,'none',2.200),es:p('M2 14L14 3','#555','none',2)+nodes([[2,14,2,'#f26a1b'],[14,3,2,'#f26a1b']])+p('M1 4l3 4 5-6',B,'none',2),
ps:r(1,6,3,3)+r(12,6,3,3)+p('M2 14h12','#a52')+nodes([[2,14,2,'#f26a1b'],[14,14,2,'#f26a1b']])+p('M5 4l3 4 5-6',B,'none',2),xs:p('M4 3l8 9M13 3L4 12','#654','none',2.400)+r(1,7,3,3)+r(12,7,3,3)+nodes([[2,14,1.300,G],[8,14,1.300,G]]),
zf:mag()+r(.5,1,15,13,'none',R,1.500),zw:mag()+`<rect x="0" y="1" width="8" height="7" fill="none" stroke="${R}" stroke-dasharray="1.500 1"/>`,zi:mag(p('M4 6.500h6M7 3.500v6',B,'none',2)),zo:mag(p('M4 6.500h6',B,'none',2)),za:mag()+r(.5,1,15,13,'none',R,1.500)+p('M1 2l4 3M15 2l-4 3M1 14l4-4M15 14l-4-4',R),
zd:c(6,6,4.500,'#dff2f6','#432')+p('M9 9l6 6','#422','none',2.600)+p('M13 1v5M11 3h4M11 8h4','#555'),pan2:`<g transform="translate(0 4) scale(.75)">${hand}</g>`+p('M13 0v7M9.500 3.500h7',B),rot:p('M8 1v13M1 8c3 3 11 3 14 0M5 4h8M5 12l3 3 3-3M3 5L1 8l4 2M1 8c2-3 12-3 14 0',B,'none',2.200),
w1:wn+p('M5 9c0-4 6-4 6-1M11 10c0 4-6 3-6 1',R,'none',1.500),w2:wn+p('M4 8V6h2M12 8V6h-2M4 11v2h2M12 11v2h-2',R,'none',1.500),
c1:r(2,5,12,9,'#8fc0e8','none')+cubeD,c2:p('M2 2h8l4 3H6z','none','#8fc0e8')+cubeD,c3:p('M11 2l3.500 4v8L11 10z','none','#8fc0e8')+cubeD,c4:r(6,6,8,8,'#8fc0e8','none')+cubeD,
axis:c(8,8,4.500,'none',R)+p('M8 9V1M8 9l-6 5M8 9l6 5M6 3l2-2 2 2','#444'),w3:wn+p('M6 9l4-3v2h6v2.500h-6v2z','none',R),w4:r(.5,1.500,12,9,'#fafafa')+r(1,2,11,2.500,'#555','none')+r(8.500,8.500,7,7,'#fafafa')+p('M10 11h4M10 13h4','#777'),
chev:p('M5 7l3 4 3-4','#555','none',1.500),cross:p('M8 1v14M1 8h14','#555')+r(5,5,6,6,'#ddd'),dist:p('M3 2v12M6 8h8M8 6L6 8l2 2M11 3h3M11 13h3','#555'),play:p('M5 3v11l7-5.500z','none','#444'),
spin:r(0,0,16,16,'#e8e8e8','#777')+p('M4 6l4-4 4 4zM4 10l4 4 4-4z','none','#111'),sping:r(0,0,16,16,'#eee','#bbb')+p('M4 6l4-4 4 4zM4 10l4 4 4-4z','none','#777'),
tup:p('M3 10l5-5 5 5','#fff','none',1.500),tcam:r(4,4,7,9,'none','#fff',1.400)+p('M11 8l3-2v5zM4 1.500h7M5 15.500h6','#fff'),tnet:r(4,3,11,8,'none','#fff',1.300)+p('M9 11v3M6 14.500h7','#fff')+r(.5,1,4,4,'#1b2942','#fff')+p('M2.500 5v8h3','#fff'),tvol:p('M1 6h3l4-4v12l-4-4H1zM10 6v4M12 4v8','#fff')+p('M14.500 2v12','#777'),
tnote:p('M1 2h19v15h-5l-5 5v-5H1z','none','#fff')+p('M4 6h13M4 9.500h13M4 13h9','#1b2942','none',1.500)+c(19,19,7.500,'#333b45','#889')+t(16.500,23,11,'1'),
};
const A={
win:p('M2 5l8-1v7.500H2zM11 4l10-1.500v9H11zM2 12.500h8V20l-8-1zM11 12.500h10v9L11 20z','none','#fff'),
task:p('M4 3v3h11V3M4 21v-3h11v3M4 8.500h11v7H4zM19 3v6M19 14v7','#fff','none',1.600)+r(18,10,3,3,'#fff','none'),
exp:p('M1 3h9l2 2h11v15H1z','none','#f7c64b')+r(1,8,22,12,'#ffe08a','none')+p('M5 21v-8h14v8h-4v-4H9v4z','none','#3f9fe8'),
chr:c(12,12,11.500,'#fbc116')+p('M12 12L2 6.300A11.500 11.500 0 0 1 22 6.300H12z','none','#e33b2e')+p('M12 12L2 6.300A11.500 11.500 0 0 0 11 23.500z','none','#2da94f')+c(12,12,5.500,'#4285f4','#fff'),
snip:`<ellipse cx="12" cy="9.500" rx="11" ry="6.500" transform="rotate(-18 12 10)" fill="#f4f4f4" stroke="#b33" stroke-width="1.500"/>`+p('M15 4L13 17M7 8l12 10','#777','none',1.500)+c(14,20,2.500,'none','#2a8fe0')+c(20,18,2.500,'none','#2a8fe0'),
word:r(6,2,17,20,'#2f7fd8','none')+r(6,12,17,10,'#143f94','none')+r(0,6,12,12,'#1b5cbe','none')+t(1.500,16,10,'W'),
vs:p('M17 1l6 3v16l-6 3L8 14l-5 4-2-1.500L5 12 1 7.500 3 6l5 4z','none','#2090dc')+p('M17 7v10l-6-5z','none','#22384a'),
ks:S24.ks,file:S24.file,
vm:p('M2 2l15-1 3 12-15 2z','#9bc','#1230d8')+p('M11 1.500l6-.5 2 8z','none','#8ab4f0')+p('M6 16l12-1 2 5-12 2z','none','#bbb')+c(18,18,5,'#ddd','#999')+t(15.500,21,8,'x','#2a8'),
note:r(1,1,22,22,'#fdd20a','none')+p('M12 23V15l11-3v2z','none','#333')+p('M14 23l9-9v9z','none','#e8b000'),
h:`<rect width="24" height="24" rx="2" fill="#fafafa"/>`+t(2,21,18,'h','#1f8fd8','normal')+c(15,8,6.500,'#f26a1b')+c(12,8,1,'#fff')+c(15,8,1,'#fff')+c(18,8,1,'#fff'),
xl:r(7,2,16,20,'#23a366','none')+r(15,7,8,8,'#107c41','none')+r(0,6,12,12,'#107c41','none')+t(2.500,16,10,'X'),
ppt:c(13,12,10.500,'#f08a68')+p('M13 1.500v10.500h10.500','none','#d35230')+r(0,6,12,12,'#c43e1c','none')+t(2.500,16,10,'P'),
disc:`<rect width="24" height="24" rx="2" fill="#2a78d8"/>`+p('M22 14v8h-9','#19c8f0','none',3)+c(12,12,8,'#d4ecff')+c(12,12,5,'#eef8ff')+c(12,12,3,'#2a6fd0'),
pdf:r(0,0,24,24,'#b3161b','none')+t(2,8,7.500,'PDF')+p('M8 19l11-8 3 3-11 7zM7 22h5','#fff','none',1.800),
clk:c(12,12,11.500,'#1b72d8')+c(11,9,4,'none','#fff')+p('M12 9v11l3-3h4z','#fff','#1b72d8',1.500),
cam:c(12,12,11.500,'#f8355f')+r(6,8,12,9,'#fff','none')+c(12,12.500,3,'#f8355f')+r(9,6,5,3,'#fff','none')
};
A.chr2=A.chr+c(17,18,5,'#9a6a3a')+p('M14 16c3 0 5 3 5 6','#543');
const svg=(n,b=16)=>`<svg viewBox="0 0 ${b} ${b}">${n}</svg>`;
const BIG={redraw:32,initial:32,previous:32,hidden:32,active:32,inactive:32,all:32,inverse:32,display:32,newwin:32,tnote:24};
const ic=n=>`<i>${svg(I[n]||'',BIG[n])}</i>`;
document.querySelectorAll('i[data-icon]').forEach(e=>e.innerHTML=svg(I[e.dataset.icon]||'',BIG[e.dataset.icon]));

/* menu tabs: label, left edge, width */
let x=45;
document.getElementById('tabs').innerHTML=[['View',60,25],['Structure',114,47],['Node/Element',191,73],['Properties',294,52],['Boundary',376,49],['Load',454,25],['Analysis',508,41],['Results',578,37],['Pushover',644,47],['Design',720,36],['Query',784,30],['Tools',842,27],['MODS Module',898,76]]
 .map((a,i)=>{const g=a[1]-x;x=a[1]+a[2];return `<span ${i?'':'class="on"'} data-w="${a[2]}" style="margin-left:${g}px">${a[0]}</span>`}).join('')
 +`<div class="r">${ic('gear')}<span class="help" data-w="24">Help</span><b class="caret" style="border-top-color:#ccc;margin:0 3px 0 0"></b>${ic('mmin')}<em style="width:3px"></em>${ic('mrest')}<em style="width:3px"></em>${ic('mx')}</div>`;

const item=n=>n==='|'?'<div class="sep"></div>':n===':'?'<div class="grip"></div>':n===':+'?'<div class="grip g12"></div>':n==='v'?'<div class="ca"><b class="caret" style="margin:0;border-top-color:#888"></b></div>'
 :n==='combo'?'<div class="combo"><b><b class="caret"></b></b></div>':`<div class="it ${n[0]==='!'?'on':''}">${ic(n.replace('!',''))}</div>`;
document.getElementById('toolbar').innerHTML=': undo v redo v : seltree tree | nodesel winsel polysel fence volsel cubesel circsel | selprev drop | usel upoly ufence ucirc | arrowdot combo nodecur combo : a1 a2 a3 a4 a5 | a6 :+ selbox persp cubes globe mon1 mon2 | dot nn en fr :+ docs unlock !lock'
 .split(' ').map(item).join('');
document.getElementById('rbar').innerHTML=': grid grid2 : gs gl !ns !es ps xs : zf zw zi zo za : zd pan2 rot : w1 w2 | c1 c2 c3 c4 axis | w3 w4'
 .split(' ').map(n=>n===':'?'<div class="hg"></div>':n==='|'?'<div class="hs"></div>':item(n)).join('');

/* tree rows: level, expander, icon, text, width */
const T=[[0,'','slab','Works',32],[1,'-','pen','Analysis Control Data',121],[2,'','pen','Eigenvalue Analysis [ Type=Eigen Vectors-Lanczos',0],[1,'-','slab','Structures',56],[2,'+','slab','Stories : 32',63],[2,'','nodes','Nodes : 6924',73],[2,'+','elems','Elements : 5900',89],[1,'-','mat','Properties',56],[2,'+','mat','Material : 11',68],[2,'+','sec','Section : 39',66],[2,'+','thick','Thickness : 4',77],[1,'-','bound','Boundaries',63],[2,'+','supp','Supports : 6924',86],[1,'-','mass','Masses',45],[2,'+','l2m','Loads to Masses : 2',118],[1,'-','sl','Static Loads',69]];
[['1 [SW ; ]',152],['2 [SDL ; ]',157],['3 [LL ; ]',148],['4 [UNIT ; ]',162],['5 [Wx ; ]',151],['6 [Wy ; ]',151],['7 [Wx(A) ; ]',169],['8 [Wy(A) ; ]',169],['9 [Wx(T)(1) ; ]',185],['10 [Wy(T)(1) ; ]',191],['11 [Ex ; ]',155],['12 [Ey ; ]',155]].forEach(a=>T.push([2,'+','lc','Static Load Case '+a[0],a[1]]));
T.push([1,'-','spec','Response Spectrum Analysis',167],[2,'+','spec','Response Spectrum Functions : 1',192],[2,'+','spec2','Response Spectrum Load Cases : 2',207],[1,'-','reb','Rebar Data',62],[2,'-','reb','Beam',32]);
[['200001','4/4-4/4-4/4'],['300001','6/6-6/6-6/6'],['300002','4/4-4/4-4/4'],['300003','4/4-4/4-4/4'],['300004','6/6-6/6-6/6']].forEach(a=>T.push([3,'','reb',`${a[0]} (${a[1]} D19 D13@100-100-1...`,233]));
T.push([2,'-','wall','Wall',22]);
[22,22,19,19,19,19,19].forEach((d,i)=>T.push([3,'','wall',`${i+1} (D${d}@100 D${d}@300 0-@0)`,157]));
const group=T.map(q=>q[0]);
document.getElementById('tree').innerHTML=T.map(([l,e,n,s,w],k)=>{
 const gw=l?20*l:1, cx=20*(l-1)+8.5; let g='';
 const dash='stroke="#8a93a5" stroke-dasharray="1 1"';
 /* a guide at a level runs on while a later sibling exists */
 const more=v=>{for(let j=k+1;j<group.length;j++){if(group[j]<v)return false;if(group[j]===v)return true}return v===3};
 for(let v=1;v<=l;v++){const gx=20*(v-1)+8.5;if(more(v))g+=`<path d="M${gx} 0V16" ${dash}/>`;else if(v===l)g+=`<path d="M${gx} 0V8" ${dash}/>`;}
 if(l)g+=`<path d="M${cx} 8.500H${gw}" ${dash}/>`;
 if(e)g+=`<rect x="${cx-4}" y="4.500" width="8" height="8" fill="#fafafa" stroke="#999"/><path d="M${cx-2.500} 8.500h5${e==='+'?`M${cx} 6v5`:''}" stroke="#2244a8"/>`;
 return `<div class="row"><svg class="gut" width="${gw}" height="16">${g}</svg>${ic(n)}<span ${w?`data-w="${w}"`:'style="letter-spacing:.52px"'}>${s}</span></div>`}).join('');

document.getElementById('apps').innerHTML='win task exp* chr snip* word vs* ks file*! vm* note* h* chr2* xl* ppt* disc* ks* file* pdf* clk* cam*'.split(' ')
 .map(n=>`<div class="app ${n.includes('*')?'run':''} ${n.includes('!')?'sel':''}"><i class="i24">${svg(A[n.replace(/[*!]/g,'')],24)}</i></div>`).join('');

/* tighten or loosen each label to its column width */
document.querySelectorAll('[data-w]').forEach(e=>{
 const w=+e.dataset.w,q=document.createRange();q.selectNodeContents(e);
 const m=q.getBoundingClientRect().width,n=[...e.textContent].length;
 e.style.letterSpacing=((w-m)/n).toFixed(3)+'px';
 e.style.width=w+'px';
});

/* wireframe tower: u units are thirds of a pixel from (820,220) */
const X=u=>Math.floor(820+u/3)+.5, Y=v=>220+v/3;
let blue='',green='',fill='';
const yAt=(P,u)=>{for(let i=1;i<P.length;i++)if(u<=P[i][0]){const a=P[i-1],b=P[i];return a[1]+(b[1]-a[1])*(u-a[0])/(b[0]-a[0])}return P[P.length-1][1]};
const levels=n=>{const L=[];for(let i=0;i<=n;i++)L.push(i*17.04*3);const z=L[n];L.push(z+65,z+162,z+231);return L};
function panel(P,V,n,extra={}){
 const L=levels(n),H=L[L.length-1],a=P[0][0],b=P[P.length-1][0];
 if(!extra.nofill)fill+='M'+P.map(q=>X(q[0])+' '+Y(q[1])).join('L')+'L'+X(b)+' '+Y(yAt(P,b)+H)+'L'+X(a)+' '+Y(yAt(P,a)+H)+'Z';
 L.forEach((h,i)=>{if(i>=(extra.skip||0)&&!(extra.open&&i===L.length-1))blue+='M'+P.map(q=>X(q[0])+' '+(Math.round(Y(q[1]+h))+.5)).join('L')});
 V.forEach((u,i)=>{const leg=extra.legs&&extra.legs[u]||0;blue+=`M${X(u)} ${Y(yAt(P,u)+(extra.skip?i%3*14:0))}V${Y(yAt(P,u)+H+leg)}`});
}
const span=(a,b,s)=>{const o=[];for(let i=a;i<=b;i+=s)o.push(i);return o};
panel([[60,70],[127,61],[160,56],[200,52]],[60,78,95,102,112,127,133,145,160,164,178,184,187,196,200],28,{legs:{}});
panel([[205,57],[220,63],[240,66],[247,71]],[205,208,226,235,241,247],28);
panel([[243,92],[262,88],[282,104],[310,122],[330,133],[372,120],[410,140],[445,125],[466,118]],span(256,344,6).concat(span(256,334,15),span(327,335,3),span(345,372,3),span(375,405,5),span(409,432,6),span(441,466,8)),28,{skip:1,open:1});
panel([[258,73],[275,82],[350,76],[388,90],[415,106],[440,104],[458,101],[466,118]],[258,265,277,290,305,318,331,352,375,388,410,428,440,458,466],28,{nofill:1});
panel([[256,142],[300,110],[345,128],[385,112],[430,150],[466,139]],[],27,{nofill:1});
panel([[270,104],[330,150],[380,134],[420,160],[440,150]],[306,324,333,337,401,404,413],27,{nofill:1});
panel([[262,125],[340,112],[400,128],[436,122]],[],28,{nofill:1,skip:1});
panel([[468,104],[478,98],[488,97]],[468,472,488],28,{nofill:1,skip:1});
panel([[488,147],[505,143],[560,134]],[505,522,529,532,544,550,560],27,{open:1});
panel([[505,97],[515,92],[560,92]],[505,529,560],0,{nofill:1});
panel([[574,88],[583,85],[620,103],[658,122]],[574,583,590,599,607,622,629,640,658],28);
panel([[576,140],[595,136],[610,125],[645,150]],[595,602,610,616,634,637,643],27,{nofill:1,open:1});
panel([[610,165],[645,140],[658,150]],[],26,{nofill:1,open:1});
panel([[667,275],[684,270]],[667,676,682,685],24);
panel([[676,242],[700,238],[745,229],[770,234],[810,232],[832,257]],[676,694,700,712,727,745,757,775,790,808,820,832],24,{skip:1});
panel([[694,256],[715,262],[745,247],[790,262],[832,254]],span(694,706,3).concat(span(711,718,4),span(721,733,3),span(739,760,6),span(764,808,4),span(812,832,5)),24,{nofill:1,skip:1,open:1});
panel([[676,242],[700,238],[745,229],[770,234],[810,232]],[676,712,745,775,808],0,{nofill:1});
panel([[826,228],[885,221],[889,226]],[826,838,847,856,862,870,880,889],24,{open:1});
panel([[904,229],[913,236]],[904,907,913],24,{});
panel([[927,240],[960,241],[980,248],[1005,262],[1016,264]],[922,928,937,949,964,973,982,985,1016].concat(span(993,1004,3)),24);
panel([[984,275],[1004,268]],[],23,{nofill:1});
panel([[700,276],[745,262],[770,280],[808,270]],[],24,{nofill:1,open:1});
/* staggered footing legs */
[[95,103,790],[127,139,804],[154,164,816],[180,196,828],[205,216,840],[228,241,852],[265,278,866],[308,324,880],[324,342,877],[350,365,874],[379,389,870],[391,405,868],[405,416,858],[416,425,862],[434,447,850],[449,460,852],[486,504,846],[529,547,838],[592,607,832],[613,640,808],[640,658,818],[709,727,812],[769,790,804],[814,831,797],[856,871,790],[922,937,781],[982,993,772]]
 .forEach(([a,b,v])=>blue+=`M${X(a)} ${Y(v+860)}V${Math.round(540+v/3)+.5}H${X(b)}V${Y(v+860)}`);
[[181,72,773],[220,97,797],[313,137,838],[358,150,855],[475,120,820],[553,108,805],[664,293,790],[751,285,782],[889,255,752]].forEach(([u,a,b])=>green+=`M${X(u)} ${Y(a)}V${540+b/3}`);
[[243,255,94,28,3],[324,333,112,28,2],[448,463,118,28,0],[702,718,252,24,1],[741,765,262,24,0],[744,757,272,24,2],[822,830,272,24,2],[974,982,247,24,2]].forEach(([a,b,v,n,d])=>levels(n).slice(0,-1).forEach(h=>green+=`M${X(a)} ${Math.round(Y(v+h))+.5}L${X(b)} ${Math.round(Y(v+h))+.5+d}`));
green+=`M${X(300)} 253.500l8 2 12-3 16-4 6 3M${X(676)} 300l9-1 10 5h14`;
const arrows=[[1571,210,1,1],[1635,210,-1,1],[1571,274,1,-1],[1635,274,-1,-1]].map(a=>`<path transform="translate(${a[0]} ${a[1]}) scale(${a[2]} ${a[3]})" d="M1 4L4 1 11 8V2H15V15H3V11H8Z"/>`).join('');
const sq=(x,y)=>`<rect x="${x}" y="${y}" width="21" height="21"/>`;
document.getElementById('model').innerHTML=
`<g shape-rendering="crispEdges" fill="none"><path d="${fill}" fill="#f4f4fb"/>
<path d="M906 262h69V790h-69zM1052 310h46V780h-46zM1147 312h8V780h-8z" fill="#cdcdfb"/><path d="M929 262h15V795h-15zM1061 308h3V780h-3z" fill="#5c5cfc"/>
<path d="${blue}" stroke="#5c5cfc"/><path d="${green}" stroke="#0a6c50"/></g>
<g fill="none" stroke="#c6e6bf"><path d="M1008 750l8-2 14 4 14 6 12-1 14-3 18-2 M1012 750l12 6 16 5 12 1 20-6 16-1v-4l-10-1-22 3M1026 758l20-3 8 6M1034 760l8-6"/></g>
<g fill="#fcfcfc" stroke="#d0c8c8">${arrows}${sq(1592.5,208.5)}${sq(1592.5,231.5)}${sq(1592.5,254.500)}${sq(1568.5,231.500)}${sq(1616.5,231.500)}</g>
<path d="M1592 208h22M1592 275.500h22M1569 231v22M1637 231v22" stroke="#bfe8f8" stroke-width="2"/>
<text x="1595" y="246" font-family="Liberation Sans" font-size="9" textLength="17" fill="#bbb" font-weight="bold">TOP</text>
<circle cx="583" cy="370" r="20" fill="#fcc480"/><path d="M584 370v15l3.500-3 3 6 3-1.500-3-5.500h4.500z" fill="#0a2f78" stroke="#071430"/>`;
```
